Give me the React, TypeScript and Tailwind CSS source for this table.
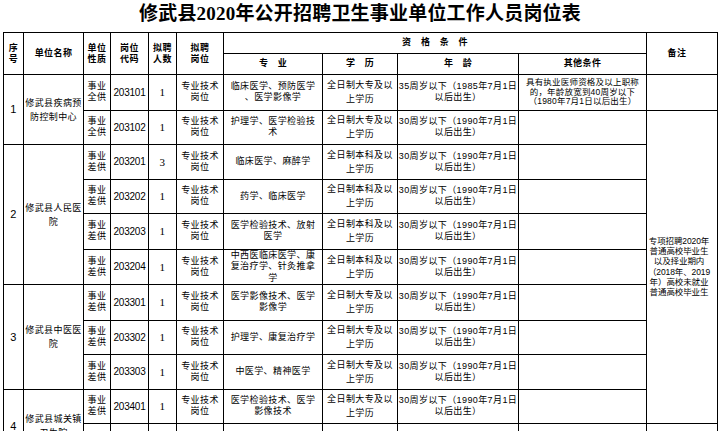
import React from "react";

const td = "border border-black p-0 text-center align-middle whitespace-nowrap";

function Lines({ lines, lh }: { lines: string[]; lh: string }) {
  return (
    <div className={lh}>
      {lines.map((l, i) => (
        <div key={i}>{l}</div>
      ))}
    </div>
  );
}

type Row = {
  seq?: { n: string; span: number };
  unit?: { lines: string[]; span: number };
  type: string;
  code: string;
  num: string;
  major: string[];
  edu: string;
  age: string;
  year: string;
  other?: string[];
  remark?: { lines: string[]; span: number } | "empty";
  h: string;
};

const rows: Row[] = [
  {
    seq: { n: "1", span: 2 },
    unit: { lines: ["修武县疾病预", "防控制中心"], span: 2 },
    type: "全供",
    code: "203101",
    num: "1",
    major: ["临床医学、预防医学", "、医学影像学"],
    edu: "大专",
    age: "35",
    year: "1985",
    other: ["具有执业医师资格及以上职称", "的，年龄放宽到40周岁以下", "（1980年7月1日以后出生）"],
    remark: "empty",
    h: "h-[35.5px]",
  },
  {
    type: "全供",
    code: "203102",
    num: "1",
    major: ["护理学、医学检验技", "术"],
    edu: "大专",
    age: "30",
    year: "1990",
    remark: {
      lines: ["专项招聘2020年", "普通高校毕业生", "以及择业期内", "（2018年、2019", "年）高校未就业", "普通高校毕业生"],
      span: 9,
    },
    h: "h-[34.5px]",
  },
  {
    seq: { n: "2", span: 4 },
    unit: { lines: ["修武县人民医", "院"], span: 4 },
    type: "差供",
    code: "203201",
    num: "3",
    major: ["临床医学、麻醉学"],
    edu: "本科",
    age: "30",
    year: "1990",
    h: "h-[34.5px]",
  },
  { type: "差供", code: "203202", num: "1", major: ["药学、临床医学"], edu: "本科", age: "30", year: "1990", h: "h-[34.5px]" },
  { type: "差供", code: "203203", num: "1", major: ["医学检验技术、放射", "医学"], edu: "本科", age: "30", year: "1990", h: "h-[35.5px]" },
  {
    type: "差供",
    code: "203204",
    num: "1",
    major: ["中西医临床医学、康", "复治疗学、针灸推拿", "学"],
    edu: "本科",
    age: "30",
    year: "1990",
    h: "h-[33.5px]",
  },
  {
    seq: { n: "3", span: 3 },
    unit: { lines: ["修武县中医医", "院"], span: 3 },
    type: "差供",
    code: "203301",
    num: "1",
    major: ["医学影像技术、医学", "影像学"],
    edu: "大专",
    age: "30",
    year: "1990",
    h: "h-[35.5px]",
  },
  { type: "差供", code: "203302", num: "1", major: ["护理学、康复治疗学"], edu: "大专", age: "30", year: "1990", h: "h-[34.5px]" },
  { type: "差供", code: "203303", num: "1", major: ["中医学、精神医学"], edu: "大专", age: "30", year: "1990", h: "h-[34.5px]" },
  {
    seq: { n: "4", span: 2 },
    unit: { lines: ["修武县城关镇", "卫生院"], span: 2 },
    type: "差供",
    code: "203401",
    num: "1",
    major: ["医学检验技术、医学", "影像技术"],
    edu: "大专",
    age: "30",
    year: "1990",
    h: "h-[34.5px]",
  },
  {
    type: "差供",
    code: "203402",
    num: "1",
    major: ["临床医学"],
    edu: "大专",
    age: "30",
    year: "1990",
    remark: "empty",
    h: "h-[40px]",
  },
];

export default function App() {
  return (
    <div
      className="w-[720px] h-[431px] overflow-hidden bg-white text-black"
      style={{ fontFamily: '"Liberation Sans", "Noto Sans CJK SC", sans-serif' }}
    >
      <div
        className="h-[32px] pt-[4px] text-center text-[19px] leading-[19px] font-bold tracking-[0.2px]"
        style={{ fontFamily: '"Liberation Serif", "Noto Sans CJK SC", serif' }}
      >
        修武县2020年公开招聘卫生事业单位工作人员岗位表
      </div>
      <div className="pl-[3px]">
        <table className="table-fixed border-collapse w-[714px] text-[9px] tracking-[0.4px]">
          <colgroup>
            <col className="w-[20px]" />
            <col className="w-[60px]" />
            <col className="w-[27px]" />
            <col className="w-[38px]" />
            <col className="w-[28px]" />
            <col className="w-[47px]" />
            <col className="w-[99px]" />
            <col className="w-[75px]" />
            <col className="w-[121px]" />
            <col className="w-[128px]" />
            <col className="w-[71px]" />
          </colgroup>
          <thead>
            <tr className="h-[21px] font-bold">
              <td rowSpan={2} className={td}><Lines lines={["序", "号"]} lh="leading-[11px]" /></td>
              <td rowSpan={2} className={td}>单位名称</td>
              <td rowSpan={2} className={td}><Lines lines={["单位", "性质"]} lh="leading-[11px]" /></td>
              <td rowSpan={2} className={td}><Lines lines={["岗位", "代码"]} lh="leading-[11px]" /></td>
              <td rowSpan={2} className={td}><Lines lines={["拟聘", "人数"]} lh="leading-[11px]" /></td>
              <td rowSpan={2} className={td}><Lines lines={["拟聘", "岗位"]} lh="leading-[11px]" /></td>
              <td colSpan={4} className={td}>资　格　条　件</td>
              <td rowSpan={2} className={td}><span className="pr-[10px]">备注</span></td>
            </tr>
            <tr className="h-[21px] font-bold">
              <td className={td}>专　业</td>
              <td className={td}>学　历</td>
              <td className={td}>年　龄</td>
              <td className={td}>其他条件</td>
            </tr>
          </thead>
          <tbody>
            {rows.map((r) => (
              <tr key={r.code} className={r.h}>
                {r.seq && (
                  <td rowSpan={r.seq.span} className={td + " text-[11px]"}>{r.seq.n}</td>
                )}
                {r.unit && (
                  <td rowSpan={r.unit.span} className={td}>
                    <Lines lines={r.unit.lines} lh="leading-[14px]" />
                  </td>
                )}
                <td className={td}><Lines lines={["事业", r.type]} lh="leading-[11px]" /></td>
                <td className={td + " text-[10px] tracking-[-0.2px]"}>{r.code}</td>
                <td className={td + " text-[11px]"} style={{ fontFamily: '"Liberation Serif", serif' }}>{r.num}</td>
                <td className={td}><Lines lines={["专业技术", "岗位"]} lh="leading-[11px]" /></td>
                <td className={td}>
                  <Lines lines={r.major} lh={r.major.length > 2 ? "leading-[11.5px]" : "leading-[11px]"} />
                </td>
                <td className={td}>
                  <Lines lines={[`全日制${r.edu}及以`, "上学历"]} lh="leading-[14px]" />
                </td>
                <td className={td}>
                  <Lines lines={[`${r.age}周岁以下（${r.year}年7月1日`, "以后出生）"]} lh="leading-[11px]" />
                </td>
                <td className={td + " text-[8.5px] tracking-[0.2px]"}>
                  {r.other ? <Lines lines={r.other} lh="leading-[9.5px]" /> : null}
                </td>
                {r.remark === "empty" && <td className={td}></td>}
                {r.remark && r.remark !== "empty" && (
                  <td rowSpan={r.remark.span} className={td + " text-[8.5px] tracking-[-0.1px]"}>
                    <div className="pr-[6px]">
                      <Lines lines={r.remark.lines} lh="leading-[10.3px]" />
                    </div>
                  </td>
                )}
              </tr>
            ))}
          </tbody>
        </table>
      </div>
    </div>
  );
}
